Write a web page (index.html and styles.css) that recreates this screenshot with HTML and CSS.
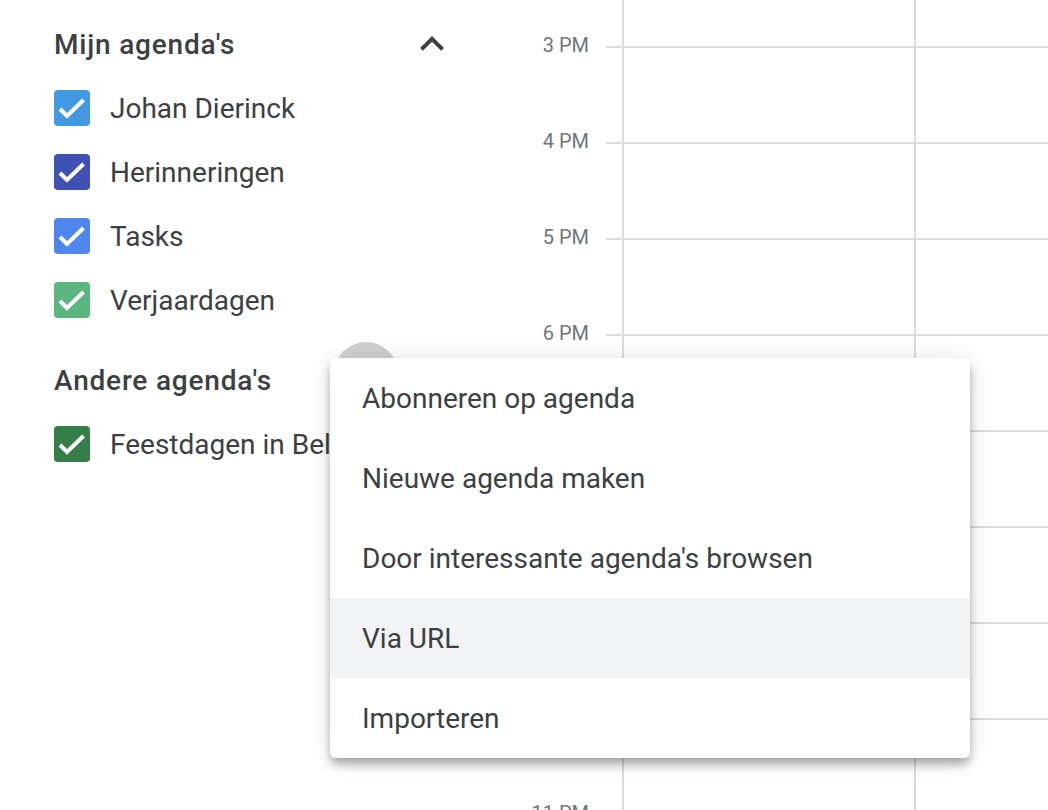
FILE: index.html
```html
<!DOCTYPE html>
<html lang="nl">
<head>
<meta charset="utf-8">
<title>Agenda</title>
<link rel="stylesheet" href="styles.css">
</head>
<body>
<div class="page">
  <aside class="sidebar">
    <div class="section-head">
      <span class="section-title">Mijn agenda's</span>
      <svg class="chevron" viewBox="0 0 24 24" width="48" height="48"><path d="M12 8l-6 6 1.41 1.41L12 10.83l4.59 4.58L18 14z"/></svg>
    </div>
    <div class="cal-row">
      <span class="box c-johan"><svg viewBox="0 0 36 36"><polyline points="6,19 13,26 29.5,10"/></svg></span>
      <span class="cal-name">Johan Dierinck</span>
    </div>
    <div class="cal-row">
      <span class="box c-herin"><svg viewBox="0 0 36 36"><polyline points="6,19 13,26 29.5,10"/></svg></span>
      <span class="cal-name">Herinneringen</span>
    </div>
    <div class="cal-row">
      <span class="box c-tasks"><svg viewBox="0 0 36 36"><polyline points="6,19 13,26 29.5,10"/></svg></span>
      <span class="cal-name">Tasks</span>
    </div>
    <div class="cal-row">
      <span class="box c-verj"><svg viewBox="0 0 36 36"><polyline points="6,19 13,26 29.5,10"/></svg></span>
      <span class="cal-name">Verjaardagen</span>
    </div>
    <div class="section-head other">
      <span class="section-title">Andere agenda's</span>
    </div>
    <div class="cal-row">
      <span class="box c-feest"><svg viewBox="0 0 36 36"><polyline points="6,19 13,26 29.5,10"/></svg></span>
      <span class="cal-name">Feestdagen in België</span>
    </div>
  </aside>
  <div class="times">
    <div class="time">3 PM</div>
    <div class="time">4 PM</div>
    <div class="time">5 PM</div>
    <div class="time">6 PM</div>
    <div class="time">7 PM</div>
    <div class="time">8 PM</div>
    <div class="time">9 PM</div>
    <div class="time">10 PM</div>
    <div class="time">11 PM</div>
  </div>
  <div class="grid">
    <div class="tick"></div>
    <div class="day"></div>
    <div class="day"></div>
  </div>

  <div class="ripple"></div>
  <ul class="menu">
    <li class="menu-item">Abonneren op agenda</li>
    <li class="menu-item">Nieuwe agenda maken</li>
    <li class="menu-item">Door interessante agenda's browsen</li>
    <li class="menu-item hover">Via URL</li>
    <li class="menu-item">Importeren</li>
  </ul>
</div>
</body>
</html>
```

FILE: styles.css
```css
* { box-sizing: border-box; }
html, body { margin: 0; padding: 0; background: #fff; }
body {
  font-family: Roboto, "Liberation Sans", Arial, sans-serif;
  color: #3c4043;
}
.page {
  position: relative;
  display: flex;
  width: 1048px;
  height: 810px;
  overflow: hidden;
}
.sidebar {
  width: 520px;
  flex: none;
  padding: 12px 64px 0 54px;
}
.section-head {
  height: 64px;
  display: flex;
  align-items: center;
  justify-content: space-between;
}
.section-head.other { margin-top: 16px; }
.section-title {
  font-size: 28px;
  font-weight: 500;
  letter-spacing: 0.8px;
  color: #3c4043;
}
.chevron { fill: #3c4043; display: block; }
.cal-row {
  height: 64px;
  display: flex;
  align-items: center;
  white-space: nowrap;
}
.box {
  width: 36px;
  height: 36px;
  border-radius: 4px;
  flex: none;
  display: block;
  margin-right: 20px;
}
.box svg { display: block; width: 36px; height: 36px; }
.box polyline { fill: none; stroke: #fff; stroke-width: 4; }
.c-johan { background: #4299e1; }
.c-herin { background: #3f51b3; }
.c-tasks { background: #4e86ec; }
.c-verj { background: #5bb57e; }
.c-feest { background: #367e47; }
.cal-name { font-size: 28px; color: #3c4043; }

.times {
  width: 86px;
  flex: none;
  padding: 35px 17px 0 0;
  display: flex;
  flex-direction: column;
  align-items: flex-end;
}
.time {
  height: 96px;
  flex: none;
  font-size: 20px;
  line-height: 20px;
  color: #70757a;
}
.grid {
  flex: 1;
  display: flex;
  background-image: linear-gradient(to bottom, #dadce0 0, #dadce0 2px, transparent 2px);
  background-size: 100% 96px;
  background-repeat: repeat-y;
  background-position: 0 46px;
}
.tick { width: 16px; flex: none; }
.day {
  width: 292px;
  flex: none;
  border-left: 2px solid #dadce0;
}

.ripple {
  position: absolute;
  left: 334px;
  top: 342px;
  width: 64px;
  height: 64px;
  border-radius: 50%;
  background: #d0d0d0;
}
.menu {
  position: absolute;
  left: 330px;
  top: 358px;
  width: 640px;
  margin: 0;
  padding: 0;
  list-style: none;
  background: #fff;
  border-radius: 6px;
  box-shadow: 0 8px 10px 0 rgba(0,0,0,.14), 0 2px 24px 0 rgba(0,0,0,.12), 0 6px 10px -2px rgba(0,0,0,.2);
}
.menu-item {
  height: 80px;
  display: flex;
  align-items: center;
  padding-left: 32px;
  font-size: 28px;
  color: #3c4043;
}
.menu-item.hover { background: #f1f3f4; }
```
